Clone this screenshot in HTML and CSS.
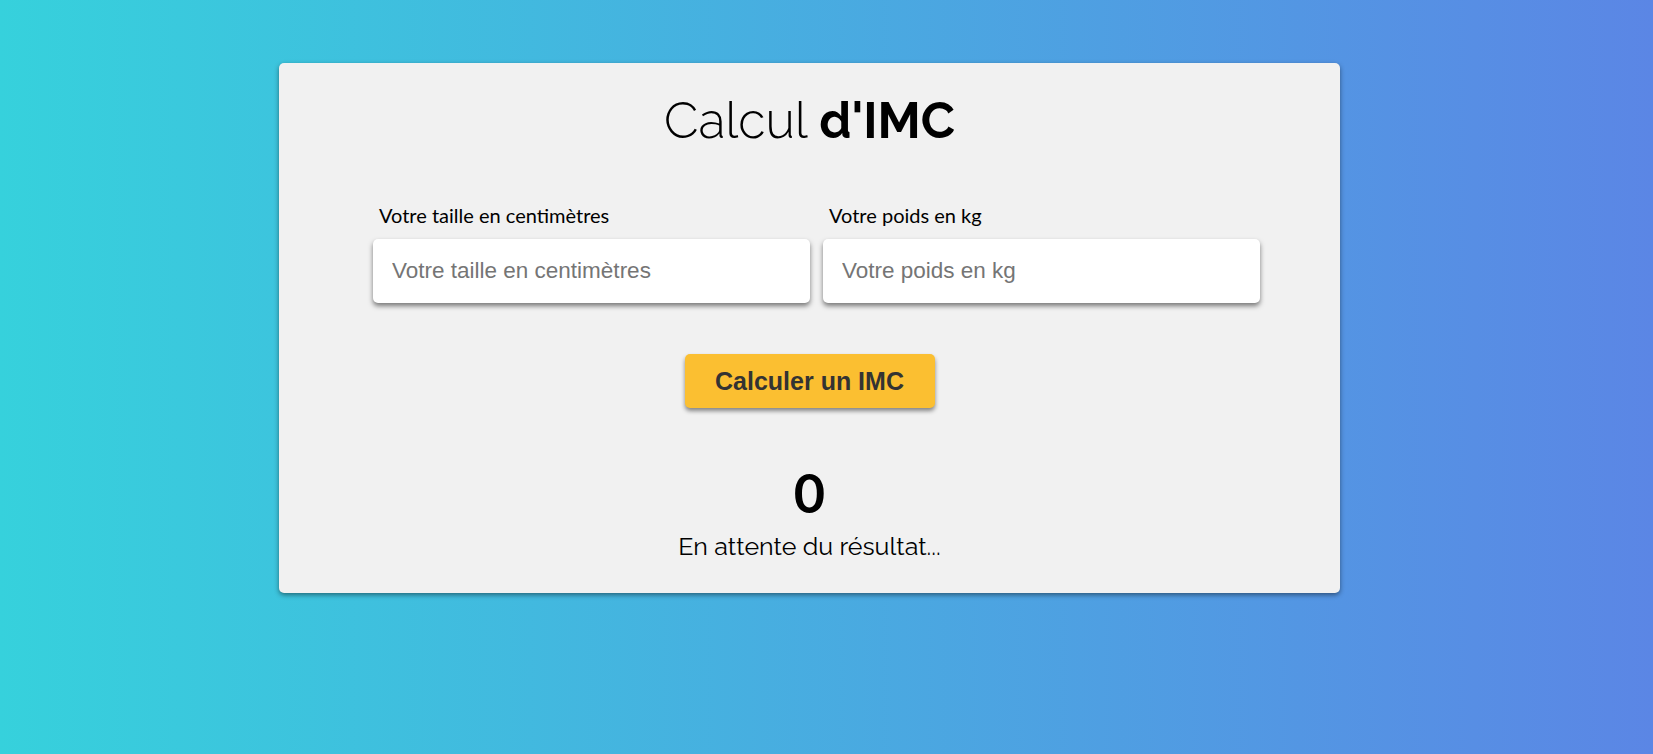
FILE: index.html
```html
<!DOCTYPE html>
<html lang="fr">
<head>
<meta charset="utf-8">
<title>Calcul d'IMC</title>
<link rel="stylesheet" href="styles.css">
</head>
<body>
<main class="card">
  <h1 class="title">Calcul <strong>d'IMC</strong></h1>
  <form class="fields">
    <div class="field">
      <label class="label" for="taille">Votre taille en centimètres</label>
      <input class="input" id="taille" type="text" placeholder="Votre taille en centimètres">
    </div>
    <div class="field">
      <label class="label" for="poids">Votre poids en kg</label>
      <input class="input" id="poids" type="text" placeholder="Votre poids en kg">
    </div>
  </form>
  <button class="btn" type="button">Calculer un IMC</button>
  <p class="value">0</p>
  <p class="status">En attente du résultat...</p>
</main>
</body>
</html>
```

FILE: styles.css
```css
* { box-sizing: border-box; }

html, body {
  margin: 0;
  height: 100%;
}

body {
  background: linear-gradient(to right, #36d1dc, #5b86e5);
  font-family: Lato, "Liberation Sans", sans-serif;
  color: #000;
  overflow: hidden;
}

.card {
  width: 1061px;
  margin: 63px 0 0 279px;
  background: #f1f1f1;
  border-radius: 5px;
  box-shadow: 0 2px 5px rgba(0, 0, 0, 0.45);
  padding: 28px 0 32px;
  display: flex;
  flex-direction: column;
  align-items: center;
}

.title {
  margin: 0;
  font-family: Raleway, Lato, sans-serif;
  font-weight: 300;
  font-size: 50px;
  line-height: 1.2;
}

.title strong { font-weight: 700; }

.fields {
  align-self: flex-start;
  margin: 52px 0 0 94px;
  display: flex;
  gap: 13px;
}

.field {
  display: flex;
  flex-direction: column;
  gap: 12px;
}

.label {
  padding-left: 6px;
  font-size: 20px;
  line-height: 1.2;
}

.input {
  width: 437px;
  height: 64px;
  border: none;
  border-radius: 5px;
  background: #fff;
  box-shadow: 0 3px 5px rgba(0, 0, 0, 0.5);
  padding: 0 19px;
  font-family: "Liberation Sans", Arial, sans-serif;
  font-size: 22.5px;
  color: #333;
  outline: none;
}

.input::placeholder { color: #757575; }

.btn {
  margin-top: 51px;
  width: 250px;
  height: 54px;
  border: none;
  border-radius: 5px;
  background: #fbbf31;
  box-shadow: 0 3px 4px rgba(0, 0, 0, 0.45);
  font-family: "Liberation Sans", Arial, sans-serif;
  font-weight: 700;
  font-size: 25px;
  color: #333;
  cursor: pointer;
}

.value {
  margin: 53px 0 0;
  font-weight: 700;
  font-size: 54px;
  line-height: 1.2;
}

.status {
  margin: 5px 0 0;
  font-family: Raleway, Lato, sans-serif;
  font-size: 25px;
  line-height: 1.2;
}
```
